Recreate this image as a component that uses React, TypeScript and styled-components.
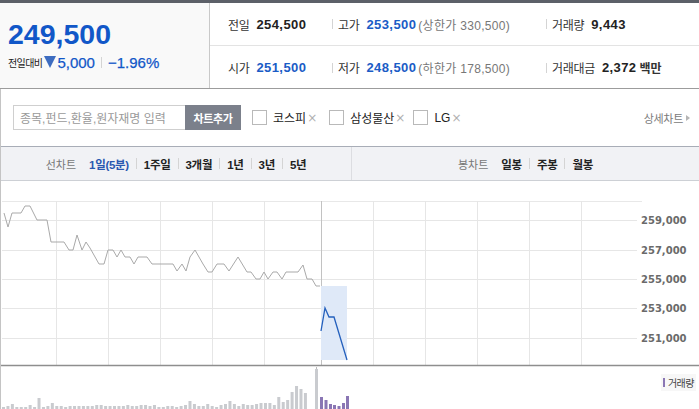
import React from "react";
import styled, { createGlobalStyle } from "styled-components";

const Global = createGlobalStyle`
  html, body { margin: 0; padding: 0; background: #fff; }
  body { font-family: "Liberation Sans", "Noto Sans CJK KR", sans-serif; color: #222; }
  * { box-sizing: border-box; }
`;

const Page = styled.div`
  width: 699px;
  height: 409px;
  overflow: hidden;
  display: flex;
  flex-direction: column;
`;

const TopStrip = styled.div`
  height: 3px;
  background: #5c6068;
`;

const Header = styled.div`
  display: flex;
  height: 86px;
  border-bottom: 1px solid #9c9c9c;
`;

const PricePanel = styled.div`
  width: 210px;
  background: #f9f9f9;
  border-right: 1px solid #c9c9c9;
  padding: 15px 0 0 8px;
`;

const BigPrice = styled.div`
  font-family: "Liberation Sans", sans-serif;
  font-weight: bold;
  font-size: 28.5px;
  line-height: 32px;
  color: #1157c8;
`;

const ChangeLine = styled.div`
  display: flex;
  align-items: center;
  margin-top: 4px;
  height: 16px;
`;

const SmallLabel = styled.span`
  font-family: "Noto Sans CJK KR", sans-serif;
  font-size: 10px;
  letter-spacing: -0.6px;
  color: #222;
  margin-right: 2px;
`;

const DownTri = styled.span`
  display: inline-block;
  width: 0;
  height: 0;
  border-left: 6px solid transparent;
  border-right: 6px solid transparent;
  border-top: 12px solid #3d6cc0;
  margin-right: 1px;
`;

const ChangeNum = styled.span`
  font-family: "Liberation Sans", sans-serif;
  font-size: 15px;
  color: #1157c8;
  -webkit-text-stroke: 0.25px #1157c8;
`;

const VSep = styled.span<{ $h?: number; $m?: number }>`
  display: inline-block;
  width: 1px;
  height: ${(p) => p.$h ?? 10}px;
  background: #d4d4d4;
  margin: 0 ${(p) => p.$m ?? 6}px;
`;

const StatsPanel = styled.div`
  flex: 1;
  display: flex;
  flex-direction: column;
`;

const StatRow = styled.div<{ $first?: boolean }>`
  height: ${(p) => (p.$first ? 43 : 42)}px;
  display: flex;
  align-items: center;
  padding-left: 18px;
  border-bottom: ${(p) => (p.$first ? "1px solid #e3e3e3" : "none")};
  padding-top: ${(p) => (p.$first ? 0 : 1)}px;
`;

const StatCell = styled.div<{ $w?: number; $pl?: number }>`
  display: flex;
  align-items: center;
  width: ${(p) => (p.$w ? `${p.$w}px` : "auto")};
  padding-left: ${(p) => p.$pl ?? 0}px;
`;

const StatLabel = styled.span`
  font-family: "Noto Sans CJK KR", sans-serif;
  font-size: 12px;
  color: #333;
  margin-right: 7px;
  letter-spacing: -0.3px;
`;

const StatValue = styled.span<{ $blue?: boolean }>`
  font-family: "Liberation Sans", sans-serif;
  font-weight: bold;
  font-size: 13px;
  letter-spacing: 0.4px;
  color: ${(p) => (p.$blue ? "#1a5cc6" : "#222")};
`;

const StatNote = styled.span`
  font-family: "Liberation Sans", "Noto Sans CJK KR", sans-serif;
  font-size: 12px;
  color: #777;
  margin-left: 2px;
  letter-spacing: 0.3px;
`;

const Unit = styled.span`
  font-family: "Noto Sans CJK KR", sans-serif;
  font-size: 12px;
  font-weight: bold;
  color: #333;
  margin-left: 3px;
`;

const Body = styled.div`
  flex: 1;
  display: flex;
  flex-direction: column;
  border-left: 1px solid #c4c4c4;
`;

const SearchRow = styled.div`
  height: 57px;
  display: flex;
  align-items: center;
  padding-left: 12px;
  padding-right: 9px;
`;

const SearchInput = styled.div`
  width: 172px;
  height: 25px;
  border: 1px solid #cfcfcf;
  border-right: none;
  display: flex;
  align-items: center;
  padding-left: 6px;
  font-family: "Liberation Sans", "Noto Sans CJK KR", sans-serif;
  font-size: 12px;
  color: #9a9a9a;
  white-space: nowrap;
  overflow: hidden;
`;

const AddButton = styled.div`
  width: 56px;
  height: 25px;
  background: #7b808b;
  color: #fff;
  font-family: "Noto Sans CJK KR", sans-serif;
  font-weight: bold;
  font-size: 11px;
  display: flex;
  align-items: center;
  justify-content: center;
  letter-spacing: -0.4px;
`;

const CompareItem = styled.div<{ $ml: number }>`
  display: flex;
  align-items: center;
  margin-left: ${(p) => p.$ml}px;
`;

const Box = styled.span`
  width: 15px;
  height: 15px;
  border: 1px solid #b9b9b9;
  background: #fff;
  margin-right: 6px;
`;

const CompareLabel = styled.span`
  font-family: "Liberation Sans", "Noto Sans CJK KR", sans-serif;
  font-size: 12px;
  color: #222;
`;

const Remove = styled.span`
  font-family: "DejaVu Sans", sans-serif;
  font-size: 12px;
  color: #b0b0b0;
  margin-left: 1px;
`;

const DetailLink = styled.div`
  margin-left: auto;
  display: flex;
  align-items: center;
  font-family: "Noto Sans CJK KR", sans-serif;
  font-size: 11px;
  color: #7a7a7a;
  letter-spacing: -0.3px;
`;

const SmallArrow = styled.span`
  display: inline-block;
  width: 0;
  height: 0;
  border-top: 3px solid transparent;
  border-bottom: 3px solid transparent;
  border-left: 4px solid #b5b5b5;
  margin-left: 3px;
`;

const Toolbar = styled.div`
  height: 35px;
  display: flex;
  background: #f1f2f5;
  border-top: 1px solid #a8adb7;
  border-bottom: 1px solid #cdd0d5;
`;

const ToolHalf = styled.div<{ $divider?: boolean }>`
  flex: ${(p) => (p.$divider ? "1" : "0 0 350px")};
  display: flex;
  align-items: center;
  justify-content: center;
  border-left: ${(p) => (p.$divider ? "1px solid #dcdde1" : "none")};
`;

const ToolTitle = styled.span`
  font-family: "Noto Sans CJK KR", sans-serif;
  font-size: 11px;
  color: #777;
  margin-right: 13px;
`;

const ToolItem = styled.span<{ $active?: boolean }>`
  font-family: "Liberation Sans", "Noto Sans CJK KR", sans-serif;
  font-size: 11.5px;
  font-weight: bold;
  letter-spacing: -0.3px;
  color: ${(p) => (p.$active ? "#2a58b0" : "#222")};
`;

const ChartArea = styled.div`
  position: relative;
  flex: 1;
`;

const ChartSvg = styled.svg`
  display: block;
  width: 698px;
  height: 228px;
`;

const Legend = styled.div`
  position: absolute;
  right: 3px;
  top: 193px;
  display: flex;
  align-items: center;
  background: #f7f7f7;
  padding: 1px 2px;
  font-family: "Noto Sans CJK KR", sans-serif;
  font-size: 10px;
  color: #444;
  letter-spacing: -0.5px;
`;

const LegendMark = styled.span`
  width: 2px;
  height: 9px;
  background: #8a76b4;
  margin-right: 3px;
`;

const grayPts =
  "4,213 8,227 12,213 21,213 25,206 30,206 37,220 47,220 51,242 64,242 69,250 73,250 77,235 82,250 86,242 90,248 99,264 104,264 108,250 113,250 117,257 121,250 125,257 130,257 134,264 138,257 147,257 152,264 173,264 177,271 182,264 186,271 190,257 195,250 203,264 208,272 212,272 217,264 224,264 229,271 238,257 247,272 251,272 256,279 260,279 264,272 268,279 273,272 277,272 282,279 286,272 298,272 303,265 307,279 312,279 316,286 320,286";
const bluePts = "321,331 325,308 329,317 334,317 347,360";

const grayVol = [
  2, 3, 5, 2, 2, 2, 4, 2, 11, 2, 3, 6, 3, 3, 2, 3, 3, 3, 3, 3, 3, 4, 4, 3, 3, 3, 3, 3, 4, 3, 3, 4, 4, 3,
  4, 2, 2, 3, 3, 2, 3, 4, 8, 5, 3, 3, 5, 3, 2, 4, 5, 8, 5, 3, 5, 4, 4, 5, 6, 6, 6, 4, 12, 7, 9, 17, 23,
  20, 16,
];
const purpleVol = [
  [320, 12],
  [324.5, 9],
  [329, 5],
  [333, 4],
  [337.5, 3],
  [342, 6],
  [346, 13],
];

const hLines = [220, 250, 279, 308, 338];
const vLines = [56, 108, 160, 212, 264, 373, 425, 477, 529, 581];
const priceLabels: [number, string][] = [
  [220, "259,000"],
  [250, "257,000"],
  [279, "255,000"],
  [308, "253,000"],
  [338, "251,000"],
];

function Chart() {
  return (
    <ChartSvg viewBox="1 181 698 228">
      <line x1={2} y1={201.5} x2={642} y2={201.5} stroke="#e8e8e8" />
      {hLines.map((y) => (
        <line key={y} x1={2} y1={y + 0.5} x2={637} y2={y + 0.5} stroke="#e6e6e6" />
      ))}
      {vLines.map((x) => (
        <line key={x} x1={x + 0.5} y1={201} x2={x + 0.5} y2={365} stroke="#e6e6e6" />
      ))}
      <line x1={321.5} y1={201} x2={321.5} y2={365} stroke="#c2c2c2" />
      <rect x={321} y={286} width={26} height={74} fill="#dfe9f8" />
      <polyline points={grayPts} fill="none" stroke="#a9a9a9" strokeWidth={1} />
      <polyline points={bluePts} fill="none" stroke="#2460bd" strokeWidth={1.3} />
      {priceLabels.map(([y, t]) => (
        <text
          key={t}
          x={641}
          y={y + 4}
          fontFamily="DejaVu Sans, sans-serif"
          fontWeight="bold"
          fontSize="10"
          fill="#6a6a6a"
        >
          {t}
        </text>
      ))}
      <line x1={1} y1={365.5} x2={699} y2={365.5} stroke="#8e8e8e" strokeWidth={1.5} />
      <line x1={316.5} y1={367} x2={316.5} y2={369} stroke="#bbb" />
      {grayVol.map((h, i) => (
        <rect key={i} x={2 + i * 4.44} y={409 - h} width={3} height={h} fill="#c9cbcf" />
      ))}
      <rect x={315} y={369} width={3} height={40} fill="#c9cbcf" />
      {purpleVol.map(([x, h]) => (
        <rect key={x} x={x} y={409 - h} width={3} height={h} fill="#8a76b4" />
      ))}
    </ChartSvg>
  );
}

export default function App() {
  return (
    <>
      <Global />
      <Page>
        <TopStrip />
        <Header>
          <PricePanel>
            <BigPrice>249,500</BigPrice>
            <ChangeLine>
              <SmallLabel>전일대비</SmallLabel>
              <DownTri />
              <ChangeNum>5,000</ChangeNum>
              <VSep $h={11} $m={6} />
              <ChangeNum>−1.96%</ChangeNum>
            </ChangeLine>
          </PricePanel>
          <StatsPanel>
            <StatRow $first>
              <StatCell $w={104}>
                <StatLabel>전일</StatLabel>
                <StatValue>254,500</StatValue>
              </StatCell>
              <VSep $m={0} />
              <StatCell $w={213} $pl={5}>
                <StatLabel>고가</StatLabel>
                <StatValue $blue>253,500</StatValue>
                <StatNote>(상한가 330,500)</StatNote>
              </StatCell>
              <VSep $m={0} />
              <StatCell $pl={5}>
                <StatLabel>거래량</StatLabel>
                <StatValue>9,443</StatValue>
              </StatCell>
            </StatRow>
            <StatRow>
              <StatCell $w={104}>
                <StatLabel>시가</StatLabel>
                <StatValue $blue>251,500</StatValue>
              </StatCell>
              <VSep $m={0} />
              <StatCell $w={213} $pl={5}>
                <StatLabel>저가</StatLabel>
                <StatValue $blue>248,500</StatValue>
                <StatNote>(하한가 178,500)</StatNote>
              </StatCell>
              <VSep $m={0} />
              <StatCell $pl={5}>
                <StatLabel>거래대금</StatLabel>
                <StatValue>2,372</StatValue>
                <Unit>백만</Unit>
              </StatCell>
            </StatRow>
          </StatsPanel>
        </Header>
        <Body>
          <SearchRow>
            <SearchInput>종목,펀드,환율,원자재명 입력</SearchInput>
            <AddButton>차트추가</AddButton>
            <CompareItem $ml={11}>
              <Box />
              <CompareLabel>코스피</CompareLabel>
              <Remove>×</Remove>
            </CompareItem>
            <CompareItem $ml={12}>
              <Box />
              <CompareLabel>삼성물산</CompareLabel>
              <Remove>×</Remove>
            </CompareItem>
            <CompareItem $ml={8}>
              <Box />
              <CompareLabel>LG</CompareLabel>
              <Remove>×</Remove>
            </CompareItem>
            <DetailLink>
              상세차트
              <SmallArrow />
            </DetailLink>
          </SearchRow>
          <Toolbar>
            <ToolHalf>
              <ToolTitle>선차트</ToolTitle>
              <ToolItem $active>1일(5분)</ToolItem>
              <VSep $h={11} $m={7} />
              <ToolItem>1주일</ToolItem>
              <VSep $h={11} $m={7} />
              <ToolItem>3개월</ToolItem>
              <VSep $h={11} $m={7} />
              <ToolItem>1년</ToolItem>
              <VSep $h={11} $m={7} />
              <ToolItem>3년</ToolItem>
              <VSep $h={11} $m={7} />
              <ToolItem>5년</ToolItem>
            </ToolHalf>
            <ToolHalf $divider>
              <ToolTitle>봉차트</ToolTitle>
              <ToolItem>일봉</ToolItem>
              <VSep $h={11} $m={7} />
              <ToolItem>주봉</ToolItem>
              <VSep $h={11} $m={7} />
              <ToolItem>월봉</ToolItem>
            </ToolHalf>
          </Toolbar>
          <ChartArea>
            <Chart />
            <Legend>
              <LegendMark />
              거래량
            </Legend>
          </ChartArea>
        </Body>
      </Page>
    </>
  );
}
